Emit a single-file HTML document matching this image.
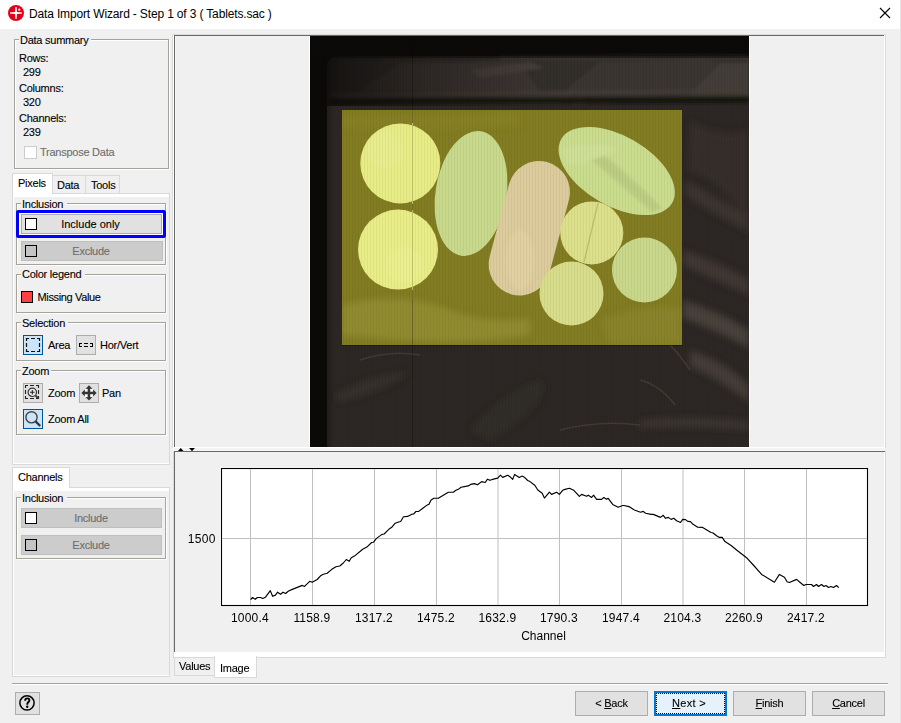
<!DOCTYPE html>
<html><head><meta charset="utf-8"><style>
html,body{margin:0;padding:0;}
body{width:901px;height:723px;overflow:hidden;position:relative;background:#f0f0f0;font-family:"Liberation Sans", sans-serif;}
.b{position:absolute;}
.t{position:absolute;white-space:nowrap;font-family:"Liberation Sans", sans-serif;-webkit-text-stroke:0.1px currentColor;}
u{text-decoration:underline;text-underline-offset:1px;}
</style></head><body>
<div class="b" style="left:0px;top:0px;width:901px;height:29px;background:#fff;"></div>
<svg class="b" style="left:8px;top:5px" width="16" height="16" viewBox="0 0 16 16">
<circle cx="8" cy="8" r="8" fill="#e3001b"/>
<path d="M8 2.2 L9 7 L13.8 8 L9 9 L8 13.8 L7 9 L2.2 8 L7 7 Z" fill="#fff"/>
<rect x="2" y="7.4" width="12" height="1.2" fill="#fff"/><rect x="7.4" y="2" width="1.2" height="12" fill="#fff"/>
<circle cx="11.3" cy="4.7" r="1.1" fill="#fff"/>
</svg>
<div class="t" style="left:29px;top:6.84px;font-size:12px;line-height:14px;color:#000;letter-spacing:-0.15px;-webkit-text-stroke:0;">Data Import Wizard - Step 1 of 3 ( Tablets.sac )</div>
<svg class="b" style="left:879px;top:7px" width="12" height="12" viewBox="0 0 12 12">
<path d="M1 1 L11 11 M11 1 L1 11" stroke="#000" stroke-width="1.1"/></svg>
<div class="b" style="left:900px;top:0px;width:1px;height:723px;background:#e5e5e5;"></div>
<div class="b" style="left:15px;top:40px;width:155px;height:130px;border:1px solid #fff;box-sizing:border-box;"></div>
<div class="b" style="left:14px;top:39px;width:155px;height:130px;border:1px solid #a5a39a;box-sizing:border-box;"></div>
<div class="b" style="left:19px;top:37px;width:72px;height:5px;background:#f0f0f0;"></div>
<div class="t" style="left:20px;top:33.69px;font-size:11px;line-height:13px;color:#000;letter-spacing:-0.25px;">Data summary</div>
<div class="t" style="left:19px;top:51.69px;font-size:11px;line-height:13px;color:#000;letter-spacing:-0.25px;">Rows:</div>
<div class="t" style="left:23px;top:65.69px;font-size:11px;line-height:13px;color:#000;letter-spacing:-0.25px;">299</div>
<div class="t" style="left:19px;top:81.69px;font-size:11px;line-height:13px;color:#000;letter-spacing:-0.25px;">Columns:</div>
<div class="t" style="left:23px;top:95.69px;font-size:11px;line-height:13px;color:#000;letter-spacing:-0.25px;">320</div>
<div class="t" style="left:19px;top:111.69px;font-size:11px;line-height:13px;color:#000;letter-spacing:-0.25px;">Channels:</div>
<div class="t" style="left:23px;top:125.69px;font-size:11px;line-height:13px;color:#000;letter-spacing:-0.25px;">239</div>
<div class="b" style="left:24px;top:146px;width:13px;height:13px;background:#fff;border:1px solid #cccccc;box-sizing:border-box;"></div>
<div class="t" style="left:40px;top:145.69px;font-size:11px;line-height:13px;color:#6d6d6d;letter-spacing:-0.25px;">Transpose Data</div>
<div class="b" style="left:12px;top:193px;width:158px;height:272px;background:#fff;border:1px solid #d9d9d9;box-sizing:border-box;"></div>
<div class="b" style="left:14px;top:197px;width:155px;height:266px;background:#f0f0f0;"></div>
<div class="b" style="left:52px;top:175px;width:34px;height:19px;background:#f0f0f0;border:1px solid #d9d9d9;box-sizing:border-box;"></div>
<div class="b" style="left:85px;top:175px;width:35px;height:19px;background:#f0f0f0;border:1px solid #d9d9d9;box-sizing:border-box;"></div>
<div class="b" style="left:12px;top:173px;width:41px;height:21px;background:#fff;border:1px solid #d9d9d9;box-sizing:border-box;border-bottom:none;"></div>
<div class="t" style="left:18px;top:176.69px;font-size:11px;line-height:13px;color:#000;letter-spacing:-0.25px;">Pixels</div>
<div class="t" style="left:57px;top:178.69px;font-size:11px;line-height:13px;color:#000;letter-spacing:-0.25px;">Data</div>
<div class="t" style="left:91px;top:178.69px;font-size:11px;line-height:13px;color:#000;letter-spacing:-0.25px;">Tools</div>
<div class="b" style="left:17px;top:204px;width:150px;height:62px;border:1px solid #fff;box-sizing:border-box;"></div>
<div class="b" style="left:16px;top:203px;width:150px;height:62px;border:1px solid #a5a39a;box-sizing:border-box;"></div>
<div class="b" style="left:21px;top:201px;width:46px;height:5px;background:#f0f0f0;"></div>
<div class="t" style="left:22px;top:197.69px;font-size:11px;line-height:13px;color:#000;letter-spacing:-0.25px;">Inclusion</div>
<div class="b" style="left:16px;top:210px;width:150px;height:28px;border:3px solid #0000ff;box-sizing:border-box;border-radius:2px;"></div>
<div class="b" style="left:19px;top:213px;width:144px;height:22px;background:#fff;"></div>
<div class="b" style="left:21px;top:214px;width:141px;height:20px;background:#e1e1e1;border:1px solid #adadad;box-sizing:border-box;"></div>
<div class="b" style="left:25px;top:218px;width:12px;height:12px;background:#fff;border:1px solid #000;box-sizing:border-box;"></div>
<div class="t" style="left:-109.5px;width:400px;text-align:center;top:217.69px;font-size:11px;line-height:13px;color:#000;letter-spacing:0px;">Include only</div>
<div class="b" style="left:21px;top:241px;width:142px;height:20px;background:#cccccc;border:1px solid #bfbfbf;box-sizing:border-box;"></div>
<div class="b" style="left:25px;top:245px;width:12px;height:12px;background:#c4c4c4;border:1px solid #000;box-sizing:border-box;"></div>
<div class="t" style="left:-109px;width:400px;text-align:center;top:244.69px;font-size:11px;line-height:13px;color:#6d6d6d;letter-spacing:-0.25px;">Exclude</div>
<div class="b" style="left:17px;top:275px;width:150px;height:39px;border:1px solid #fff;box-sizing:border-box;"></div>
<div class="b" style="left:16px;top:274px;width:150px;height:39px;border:1px solid #a5a39a;box-sizing:border-box;"></div>
<div class="b" style="left:21px;top:272px;width:64px;height:5px;background:#f0f0f0;"></div>
<div class="t" style="left:22px;top:267.69px;font-size:11px;line-height:13px;color:#000;letter-spacing:-0.25px;">Color legend</div>
<div class="b" style="left:21px;top:291px;width:12px;height:12px;background:#ff4040;border:1px solid #000;box-sizing:border-box;"></div>
<div class="t" style="left:37.5px;top:290.69px;font-size:11px;line-height:13px;color:#000;letter-spacing:-0.35px;">Missing Value</div>
<div class="b" style="left:17px;top:323px;width:150px;height:39px;border:1px solid #fff;box-sizing:border-box;"></div>
<div class="b" style="left:16px;top:322px;width:150px;height:39px;border:1px solid #a5a39a;box-sizing:border-box;"></div>
<div class="b" style="left:21px;top:320px;width:47px;height:5px;background:#f0f0f0;"></div>
<div class="t" style="left:22px;top:316.69px;font-size:11px;line-height:13px;color:#000;letter-spacing:-0.25px;">Selection</div>
<div class="b" style="left:23px;top:335px;width:20px;height:20px;background:#cce4f7;border:1px solid #005499;box-sizing:border-box;"></div>
<svg class="b" style="left:23px;top:335px" width="20" height="20"><path d="M3.5 6V3.5H6M8 3.5h4M14 3.5h2.5V6M16.5 8v4M16.5 14v2.5H14M12 16.5H8M6 16.5H3.5V14M3.5 12V8" fill="none" stroke="#111" stroke-width="1.2"/></svg>
<div class="t" style="left:48px;top:338.69px;font-size:11px;line-height:13px;color:#000;letter-spacing:-0.25px;">Area</div>
<div class="b" style="left:76px;top:335px;width:20px;height:20px;background:#e1e1e1;border:1px solid #adadad;box-sizing:border-box;"></div>
<svg class="b" style="left:76px;top:335px" width="20" height="20"><path d="M3 8h3v1h-2v2h2v1h-3z M8 8h4v1h-4z M8 11h4v1h-4z M14 8h3v4h-3v-1h2v-2h-2z" fill="#000"/></svg>
<div class="t" style="left:100px;top:338.69px;font-size:11px;line-height:13px;color:#000;letter-spacing:-0.25px;">Hor/Vert</div>
<div class="b" style="left:17px;top:371px;width:150px;height:65px;border:1px solid #fff;box-sizing:border-box;"></div>
<div class="b" style="left:16px;top:370px;width:150px;height:65px;border:1px solid #a5a39a;box-sizing:border-box;"></div>
<div class="b" style="left:21px;top:368px;width:30px;height:5px;background:#f0f0f0;"></div>
<div class="t" style="left:22px;top:364.69px;font-size:11px;line-height:13px;color:#000;letter-spacing:-0.25px;">Zoom</div>
<div class="b" style="left:23px;top:383px;width:20px;height:20px;background:#e1e1e1;border:1px solid #adadad;box-sizing:border-box;"></div>
<svg class="b" style="left:23px;top:383px" width="20" height="20"><path d="M2.5 5V2.5H5M7 2.5h4M13 2.5h2.5V5M15.5 7v4M15.5 13v2.5H13M11 15.5H7M5 15.5H2.5V13M2.5 11V7" fill="none" stroke="#222" stroke-width="1.1"/><circle cx="9.3" cy="9.3" r="4.2" fill="#ececec" stroke="#333" stroke-width="1.2"/><path d="M9.3 7v4.6M7 9.3h4.6" stroke="#222" stroke-width="1.1"/><path d="M12.6 12.6l3 3" stroke="#333" stroke-width="1.8"/></svg>
<div class="t" style="left:48px;top:386.69px;font-size:11px;line-height:13px;color:#000;letter-spacing:-0.25px;">Zoom</div>
<div class="b" style="left:79px;top:383px;width:20px;height:20px;background:#e1e1e1;border:1px solid #adadad;box-sizing:border-box;"></div>
<svg class="b" style="left:79px;top:383px" width="20" height="20"><path d="M10 2.3L17.6 9.9L10 17.5L2.4 9.9Z" fill="#353535"/><rect x="5.8" y="5.8" width="2.9" height="2.9" fill="#f8f8f8"/><rect x="11.2" y="5.8" width="2.9" height="2.9" fill="#f8f8f8"/><rect x="5.8" y="11.2" width="2.9" height="2.9" fill="#f8f8f8"/><rect x="11.2" y="11.2" width="2.9" height="2.9" fill="#f8f8f8"/></svg>
<div class="t" style="left:102px;top:386.69px;font-size:11px;line-height:13px;color:#000;letter-spacing:-0.25px;">Pan</div>
<div class="b" style="left:23px;top:409px;width:20px;height:20px;background:#cce4f7;border:1px solid #005499;box-sizing:border-box;"></div>
<svg class="b" style="left:23px;top:409px" width="20" height="20"><circle cx="8.5" cy="8.3" r="5.6" fill="none" stroke="#444" stroke-width="1.4"/><path d="M12.6 12.4l4.6 4.6" stroke="#333" stroke-width="2.2"/></svg>
<div class="t" style="left:48px;top:412.69px;font-size:11px;line-height:13px;color:#000;letter-spacing:-0.25px;">Zoom All</div>
<div class="b" style="left:12px;top:487px;width:158px;height:190px;background:#fff;border:1px solid #d9d9d9;box-sizing:border-box;"></div>
<div class="b" style="left:14px;top:491px;width:155px;height:184px;background:#f0f0f0;"></div>
<div class="b" style="left:12px;top:467px;width:58px;height:21px;background:#fff;border:1px solid #d9d9d9;box-sizing:border-box;border-bottom:none;"></div>
<div class="t" style="left:18px;top:470.69px;font-size:11px;line-height:13px;color:#000;letter-spacing:-0.25px;">Channels</div>
<div class="b" style="left:17px;top:498px;width:150px;height:62px;border:1px solid #fff;box-sizing:border-box;"></div>
<div class="b" style="left:16px;top:497px;width:150px;height:62px;border:1px solid #a5a39a;box-sizing:border-box;"></div>
<div class="b" style="left:21px;top:495px;width:46px;height:5px;background:#f0f0f0;"></div>
<div class="t" style="left:22px;top:491.69px;font-size:11px;line-height:13px;color:#000;letter-spacing:-0.25px;">Inclusion</div>
<div class="b" style="left:21px;top:508px;width:141px;height:20px;background:#cccccc;border:1px solid #bfbfbf;box-sizing:border-box;"></div>
<div class="b" style="left:25px;top:512px;width:12px;height:12px;background:#fff;border:1px solid #000;box-sizing:border-box;"></div>
<div class="t" style="left:-109px;width:400px;text-align:center;top:511.69px;font-size:11px;line-height:13px;color:#6d6d6d;letter-spacing:-0.25px;">Include</div>
<div class="b" style="left:21px;top:535px;width:141px;height:20px;background:#cccccc;border:1px solid #bfbfbf;box-sizing:border-box;"></div>
<div class="b" style="left:25px;top:539px;width:12px;height:12px;background:#c4c4c4;border:1px solid #000;box-sizing:border-box;"></div>
<div class="t" style="left:-109px;width:400px;text-align:center;top:538.69px;font-size:11px;line-height:13px;color:#6d6d6d;letter-spacing:-0.25px;">Exclude</div>
<div class="b" style="left:172px;top:34px;width:714px;height:414px;background:#dcdcdc;"></div>
<div class="b" style="left:173px;top:35px;width:713px;height:413px;background:#fff;"></div>
<div class="b" style="left:174px;top:35px;width:710px;height:1px;background:#696969;"></div>
<div class="b" style="left:174px;top:35px;width:1px;height:412px;background:#696969;"></div>
<div class="b" style="left:175px;top:36px;width:709px;height:411px;background:#f0f0f0;"></div>
<div class="b" style="left:175px;top:36px;width:1px;height:411px;background:#f8f8f8;"></div>
<div class="b" style="left:885px;top:34px;width:1px;height:414px;background:#dcdcdc;"></div>
<div class="b" style="left:172px;top:448px;width:713px;height:3px;background:#f4f4f4;"></div>
<svg class="b" style="left:0;top:0" width="901" height="723">
<defs>
<clipPath id="ic"><rect x="310" y="36" width="439" height="411"/></clipPath>
<clipPath id="yc"><rect x="342" y="110" width="340" height="235"/></clipPath>
<pattern id="stripes" x="310" y="0" width="3" height="10" patternUnits="userSpaceOnUse"><rect x="0" y="0" width="1" height="10" fill="#000" opacity="0.045"/></pattern>
<linearGradient id="seamg" x1="0" y1="0" x2="1" y2="0"><stop offset="0" stop-color="#0c0a09" stop-opacity="0.75"/><stop offset="0.25" stop-color="#0c0a09" stop-opacity="0.3"/><stop offset="0.5" stop-color="#0c0a09" stop-opacity="0"/></linearGradient>
<linearGradient id="leftg" x1="0" y1="0" x2="1" y2="0">
<stop offset="0" stop-color="#0c0a09" stop-opacity="1"/><stop offset="1" stop-color="#0c0a09" stop-opacity="0"/></linearGradient>
<filter id="blur3" x="-20%" y="-20%" width="140%" height="140%"><feGaussianBlur stdDeviation="3"/></filter>
<filter id="blur2" x="-20%" y="-20%" width="140%" height="140%"><feGaussianBlur stdDeviation="1.6"/></filter>
<filter id="blur1"><feGaussianBlur stdDeviation="0.6"/></filter>
</defs>
<rect x="309" y="36" width="441" height="412" fill="#fff"/>
<g clip-path="url(#ic)">
<rect x="310" y="36" width="439" height="411" fill="#0c0a09"/>
<path d="M327 447 L327 68 Q327 56 340 56 L749 56 L749 447 Z" fill="#2c2724"/>
<g filter="url(#blur2)">
<path d="M338 60 L749 58 L749 97 L338 99 Z" fill="#332d29"/>
<path d="M360 90 L400 64 L520 62 L540 92 Z" fill="#3b3531" opacity="0.9"/>
<path d="M560 95 L600 62 L700 60 L749 64 L749 92 Z" fill="#3b3531" opacity="0.9"/>
<path d="M690 95 L720 64 L749 62 L749 95 Z" fill="#463f39" opacity="0.8"/>
<path d="M470 70 L530 62 L545 68 L480 78 Z" fill="#4a433d" opacity="0.7"/>
<path d="M330 92 L749 89 L749 94 L330 97 Z" fill="#433c36" opacity="0.8"/>
<path d="M330 99 L749 97 L749 103 L330 104 Z" fill="#151210"/>
<path d="M500 56 L749 55 L749 60 L500 61 Z" fill="#3e3833" opacity="0.6"/>
</g>
<g filter="url(#blur3)">
<path d="M335 395 Q370 375 410 372 Q380 392 340 402 Z" fill="#3d3733" opacity="0.6"/>
<path d="M470 430 Q500 395 540 380 Q555 400 490 440 Z" fill="#3a3430" opacity="0.4"/>
<path d="M683 300 Q720 312 749 330 L749 348 Q715 330 683 318 Z" fill="#4a423d" opacity="0.9"/>
<path d="M690 350 Q725 362 749 385 L749 402 Q720 380 690 366 Z" fill="#4a423d" opacity="0.8"/>
<path d="M683 250 Q720 262 749 280 L749 295 Q715 280 683 265 Z" fill="#433b37" opacity="0.8"/>
<path d="M690 120 Q720 140 748 130 L748 220 Q720 180 688 170 Z" fill="#37312d" opacity="0.8"/>
<path d="M686 180 Q720 200 749 215 L749 232 Q715 215 686 196 Z" fill="#3f3834" opacity="0.8"/>
<path d="M640 420 Q700 415 749 422 L749 430 Q700 425 640 428 Z" fill="#433b37" opacity="0.7"/>
</g>
<g filter="url(#blur1)" fill="none" stroke="#4a423e" stroke-width="1.5" opacity="0.7">
<path d="M640 380 Q660 385 675 405"/><path d="M560 430 Q600 420 640 425"/><path d="M650 330 Q670 340 690 370"/><path d="M360 360 Q390 350 420 355"/>
</g>
<rect x="310" y="56" width="24" height="391" fill="url(#leftg)"/>
<rect x="320" y="54" width="429" height="52" fill="url(#seamg)"/>
<rect x="327" y="55" width="422" height="3" fill="#0c0a09" opacity="0.5"/>
<rect x="342" y="110" width="340" height="235" fill="#827c22"/><rect x="342" y="345" width="341" height="1" fill="#141110" opacity="0.6"/>
<g clip-path="url(#yc)"><g filter="url(#blur3)">
<path d="M342 305 Q400 290 450 310 Q490 325 530 318 L530 335 Q470 345 400 340 L342 335 Z" fill="#948e34" opacity="0.8"/>
<path d="M600 320 Q650 300 682 310 L682 344 L610 344 Z" fill="#8c8630" opacity="0.7"/>
<path d="M342 115 Q420 120 520 112 L520 125 Q430 132 342 128 Z" fill="#8a842a" opacity="0.6"/>
</g></g>
<g filter="url(#blur1)">
<circle cx="400.3" cy="163.4" r="40" fill="#e7ec86"/>
<circle cx="398" cy="249.6" r="40" fill="#e8ed87"/>
<ellipse cx="471" cy="193.5" rx="35.5" ry="63" transform="rotate(9 471 193.5)" fill="#c8d98b"/>
<rect x="498.3" y="159.75" width="62" height="137" rx="31" ry="31" transform="rotate(15 529.3 228.25)" fill="#dccb9c"/>
<ellipse cx="616.7" cy="171" rx="64" ry="35" transform="rotate(30 616.7 171)" fill="#cadc8e"/>
<circle cx="591.8" cy="232.9" r="31.5" fill="#dce08a"/>
<circle cx="644.5" cy="270" r="32.5" fill="#c9d78b"/>
<circle cx="571.5" cy="293.5" r="32" fill="#d7dd8b"/>
</g>
<g filter="url(#blur2)" opacity="0.5">
<circle cx="385" cy="150" r="18" fill="#eaee96"/>
<circle cx="405" cy="265" r="18" fill="#eef296"/>
<ellipse cx="520" cy="260" rx="14" ry="30" fill="#e4d5a8"/>
</g>
<path d="M598 203 L584 262" stroke="#b6ba6c" stroke-width="1.4" opacity="0.8"/>
<g filter="url(#blur2)" opacity="0.6"><path d="M598 150 Q630 175 662 208 L652 212 Q620 185 592 160 Z" fill="#b4c47c"/><path d="M560 150 Q590 140 620 148 Q600 160 570 165 Z" fill="#d2e29c"/></g>
<line x1="412.5" y1="36" x2="412.5" y2="447" stroke="#000" stroke-width="1" opacity="0.25"/>
<line x1="412.5" y1="110" x2="412.5" y2="300" stroke="#747026" stroke-width="1"/>
<line x1="412.5" y1="123" x2="412.5" y2="204" stroke="#c3c76a" stroke-width="1"/>
<line x1="412.5" y1="210" x2="412.5" y2="290" stroke="#c3c76a" stroke-width="1"/>
<rect x="310" y="36" width="439" height="411" fill="url(#stripes)"/>
</g></svg>
<svg class="b" style="left:176px;top:446px" width="24" height="8"><path d="M2 5h5.5l-2.75-3z" fill="#000"/><path d="M13 2h6l-3 3.3z" fill="#000"/></svg>
<div class="b" style="left:173px;top:451px;width:713px;height:207px;background:#fff;border:1px solid #d9d9d9;box-sizing:border-box;"></div>
<div class="b" style="left:174px;top:451px;width:711px;height:1px;background:#696969;"></div>
<div class="b" style="left:174px;top:451px;width:1px;height:201px;background:#696969;"></div>
<div class="b" style="left:175px;top:452px;width:709px;height:200px;background:#f0f0f0;"></div>
<svg class="b" style="left:0;top:0" width="901" height="723">
<rect x="220" y="467" width="648" height="139" fill="#fff"/>
<rect x="221.5" y="468.5" width="646" height="137" fill="#fff" stroke="#000" stroke-width="1.1"/>
<line x1="250.5" y1="469" x2="250.5" y2="605" stroke="#c0c0c0" stroke-width="1"/>
<line x1="312.5" y1="469" x2="312.5" y2="605" stroke="#c0c0c0" stroke-width="1"/>
<line x1="374.5" y1="469" x2="374.5" y2="605" stroke="#c0c0c0" stroke-width="1"/>
<line x1="436.5" y1="469" x2="436.5" y2="605" stroke="#c0c0c0" stroke-width="1"/>
<line x1="498" y1="469" x2="498" y2="605" stroke="#c0c0c0" stroke-width="1"/>
<line x1="559.5" y1="469" x2="559.5" y2="605" stroke="#c0c0c0" stroke-width="1"/>
<line x1="621.5" y1="469" x2="621.5" y2="605" stroke="#c0c0c0" stroke-width="1"/>
<line x1="683" y1="469" x2="683" y2="605" stroke="#c0c0c0" stroke-width="1"/>
<line x1="744.5" y1="469" x2="744.5" y2="605" stroke="#c0c0c0" stroke-width="1"/>
<line x1="806.5" y1="469" x2="806.5" y2="605" stroke="#c0c0c0" stroke-width="1"/>
<line x1="222" y1="538.5" x2="867" y2="538.5" stroke="#c0c0c0" stroke-width="1"/>
<polyline fill="none" stroke="#000" stroke-width="1.15" stroke-linejoin="round" points="250.6,599.7 252.5,597.5 255.2,599.3 257.4,597.5 260.5,597.5 262.7,598.5 265.5,597.2 270.3,590.7 272.6,596.3 275.5,595.1 277.6,592.2 280.5,594.3 283,592.2 285.5,593.5 288.6,591 292.3,589.4 302.3,585.4 304.5,586.4 309.7,581.3 312.2,582.3 317.2,579.5 321,575.4 323.4,574.2 327.2,573.3 331.5,569.6 335.9,566.7 339.8,566 343.3,563 346.3,559.5 349.2,561.3 351.3,557.7 354.4,556.1 362.7,549.2 366.8,547.1 371.7,542.5 373.5,542.2 376.5,538.4 382,534.4 384.1,534 389.6,528.7 391.7,527.3 395.2,523.2 397.9,522.2 400.7,521.5 403.5,516.7 407.6,516.4 411.8,514.3 413.8,513.9 415.9,511.5 418.7,511.4 423.5,507.7 426.3,505.6 429,504.2 431.1,500 433.9,498.2 438.3,498.3 448.3,492.2 453.3,492.2 455.5,490.5 458.9,488.9 461.1,487.2 464.4,486.6 468.3,485.9 470.5,484.4 474.4,483.6 477.5,484.8 481.6,481.6 485.2,482.5 487.5,479.2 489.9,480.3 494.4,478.9 497.7,478.1 500.5,475.2 502.7,477.4 507.7,475.3 509.9,476.7 512.7,479.4 514.6,474.4 519.3,477.4 522.1,476.1 524.3,477.2 527.7,480.5 530,481.6 535,485.5 537.8,490 542.2,493.3 544.4,498.1 549.4,492.2 551.6,494.4 556.6,492.2 559.4,494.4 562.7,490.3 565,489.4 569.4,488.3 573.8,490.3 579.4,496.4 581.6,494.4 586.6,496.3 588.3,495.2 591.6,497.4 593.6,495.2 596.6,499.4 601.6,499.4 603.8,497.5 606.6,499.2 608.2,498.3 612.7,504.4 618.2,507.2 622.7,505.5 623.9,505.5 628.9,506.6 634.4,510 640.5,512.2 643.3,511.4 645.5,513.3 651.1,514.4 653.3,514.4 660.5,517.4 663.3,515.3 665.5,518.3 668.3,517.4 671.1,519.4 673.8,518.3 676.6,520.7 680.5,522.5 682.7,519.4 685.5,519.6 687.7,521.4 690.5,521.6 692.7,524.1 697.7,527.2 702.7,527.4 711,532.5 712.7,532.7 716.6,535.8 719.4,537.4 722.2,537.4 725,541.6 731.1,545.5 737.2,550.5 747.2,558.3 753.3,565 761.6,574.4 774.4,582.2 779.4,574.4 784.4,577.2 787.1,581.8 789.4,582.5 796.6,579.4 799.9,582.2 803.8,585.5 806,584.5 811.5,584.5 813.5,586.5 816.5,584.5 818.5,586.5 821.5,584.5 824,586.5 826,585.5 828.5,587.5 831,586.5 833.5,587.5 836.5,585.5 838.8,587.7"/>
<g font-family="Liberation Sans" font-size="12" fill="#000">
<text x="249.9" y="622" text-anchor="middle" letter-spacing="0.2">1000.4</text>
<text x="311.9" y="622" text-anchor="middle" letter-spacing="0.2">1158.9</text>
<text x="373.9" y="622" text-anchor="middle" letter-spacing="0.2">1317.2</text>
<text x="435.9" y="622" text-anchor="middle" letter-spacing="0.2">1475.2</text>
<text x="497.4" y="622" text-anchor="middle" letter-spacing="0.2">1632.9</text>
<text x="558.9" y="622" text-anchor="middle" letter-spacing="0.2">1790.3</text>
<text x="620.9" y="622" text-anchor="middle" letter-spacing="0.2">1947.4</text>
<text x="682.4" y="622" text-anchor="middle" letter-spacing="0.2">2104.3</text>
<text x="743.9" y="622" text-anchor="middle" letter-spacing="0.2">2260.9</text>
<text x="805.9" y="622" text-anchor="middle" letter-spacing="0.2">2417.2</text>
<text x="215.7" y="543" text-anchor="end" letter-spacing="0.3">1500</text>
<text x="543.5" y="640" text-anchor="middle">Channel</text>
</g></svg>
<div class="b" style="left:174px;top:657px;width:41px;height:19px;background:#f0f0f0;border:1px solid #d9d9d9;box-sizing:border-box;"></div>
<div class="b" style="left:214px;top:656px;width:43px;height:22px;background:#fff;border:1px solid #d9d9d9;box-sizing:border-box;border-top:none;"></div>
<div class="t" style="left:179px;top:659.69px;font-size:11px;line-height:13px;color:#000;letter-spacing:-0.25px;">Values</div>
<div class="t" style="left:220px;top:661.69px;font-size:11px;line-height:13px;color:#000;letter-spacing:-0.25px;">Image</div>
<div class="b" style="left:12px;top:683px;width:876px;height:1px;background:#a0a0a0;"></div>
<div class="b" style="left:12px;top:684px;width:876px;height:1px;background:#fff;"></div>
<div class="b" style="left:15px;top:692px;width:25px;height:23px;background:#e1e1e1;border:1px solid #adadad;box-sizing:border-box;"></div>
<svg class="b" style="left:15px;top:692px" width="25" height="23"><circle cx="12" cy="10.9" r="7.1" fill="none" stroke="#000" stroke-width="1.5"/><path d="M10.1 8.7 C10.2 7 11.2 6.4 12.3 6.4 C13.6 6.4 14.4 7.2 14.4 8.3 C14.4 9.8 12.5 10.1 12.3 11.9 V12.7" stroke="#000" stroke-width="1.9" fill="none"/><circle cx="12.2" cy="14.7" r="1.2" fill="#000"/></svg>
<div class="b" style="left:575px;top:691px;width:73px;height:25px;background:#e1e1e1;border:1px solid #adadad;box-sizing:border-box;"></div>
<div class="t" style="left:411.5px;width:400px;text-align:center;top:696.69px;font-size:11px;line-height:13px;color:#000;letter-spacing:-0.25px;">&lt; <u>B</u>ack</div>
<div class="b" style="left:654px;top:691px;width:73px;height:25px;background:#e5f1fb;border:2px solid #0078d7;box-sizing:border-box;"></div>
<div class="b" style="left:656px;top:693px;width:69px;height:21px;border:1px dotted #000;box-sizing:border-box;"></div>
<div class="t" style="left:489px;width:400px;text-align:center;top:696.69px;font-size:11px;line-height:13px;color:#000;letter-spacing:0.3px;"><u>N</u>ext &gt;</div>
<div class="b" style="left:733px;top:691px;width:73px;height:25px;background:#e1e1e1;border:1px solid #adadad;box-sizing:border-box;"></div>
<div class="t" style="left:569.5px;width:400px;text-align:center;top:696.69px;font-size:11px;line-height:13px;color:#000;letter-spacing:-0.25px;"><u>F</u>inish</div>
<div class="b" style="left:812px;top:691px;width:73px;height:25px;background:#e1e1e1;border:1px solid #adadad;box-sizing:border-box;"></div>
<div class="t" style="left:648.5px;width:400px;text-align:center;top:696.69px;font-size:11px;line-height:13px;color:#000;letter-spacing:-0.25px;"><u>C</u>ancel</div>
</body></html>
